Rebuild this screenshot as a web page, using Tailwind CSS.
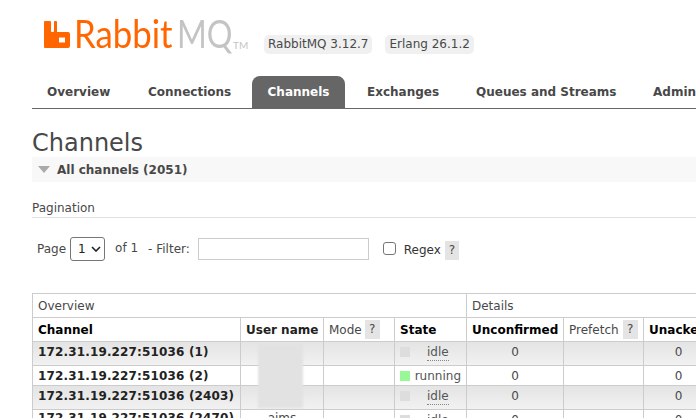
<!doctype html>
<html><head><meta charset="utf-8"><script src="https://cdn.jsdelivr.net/npm/@tailwindcss/browser@4"></script></head>
<body class="bg-white">
<div class="relative w-[696px] h-[418px] overflow-hidden font-['DejaVu_Sans',sans-serif] text-[#484848] text-[12px]">
  <header class="h-[76px] pl-[44px] flex items-start">
    <svg width="27" height="27" viewBox="0 0 27 27" class="mt-[21px] shrink-0"><path fill="#f60" fill-rule="evenodd" d="M1 0h5a1 1 0 0 1 1 1v9a1 1 0 0 0 1 1h1a1 1 0 0 0 1-1V1a1 1 0 0 1 1-1h1a1 1 0 0 1 1 1v10h11a2 2 0 0 1 2 2v12a2 2 0 0 1-2 2H1a1 1 0 0 1-1-1V1a1 1 0 0 1 1-1zM15 16.5v5h6v-5z"/></svg>
    <div class="w-[161px] shrink-0 mt-[11px] ml-[3px] flex text-[38px] leading-[44px] font-normal font-['Lato',sans-serif] whitespace-nowrap">
      <span class="inline-block w-[103px] origin-left scale-x-[.915] text-[#f60]">Rabbit</span>
      <span class="inline-block origin-left scale-x-[.845] text-[#c4c4c4]">MQ</span>
    </div>
    <span class="-ml-[2px] w-[31px] shrink-0 mt-[39px] text-[10px] leading-[12px] text-[#c4c4c4] font-['Lato',sans-serif]">TM</span>
    <div class="mt-[35px] flex gap-[13px] text-[12px] text-[#484848] whitespace-nowrap">
      <span class="bg-[#f0f0f0] rounded-[5px] h-[19px] leading-[19px] px-[4px]">RabbitMQ 3.12.7</span>
      <span class="bg-[#f0f0f0] rounded-[5px] h-[19px] leading-[19px] px-[4px]">Erlang 26.1.2</span>
    </div>
  </header>
  <nav class="ml-[32px] h-[33px] border-b border-[#666] flex font-bold text-[12px] text-[#484848] whitespace-nowrap">
    <a class="shrink-0 pl-[15px] w-[101px] leading-[33px]">Overview</a>
    <a class="shrink-0 pl-[15px] w-[119px] leading-[33px]">Connections</a>
    <a class="shrink-0 w-[93px] h-[32px] leading-[33px] text-center bg-[#666] text-white rounded-t-[8px]">Channels</a>
    <a class="shrink-0 pl-[22px] w-[131px] leading-[33px]">Exchanges</a>
    <a class="shrink-0 w-[177px] leading-[33px]">Queues and Streams</a>
    <a class="shrink-0 leading-[33px]">Admin</a>
  </nav>
  <main class="px-[32px] w-[760px]">
    <h1 class="mt-[19px] text-[24px] leading-[30px] font-normal">Channels</h1>
    <div class="-mt-[1px] h-[25px] bg-[#f8f8f8] flex items-center pl-[6px] font-bold text-[12px]">
      <svg width="12" height="7" viewBox="0 0 12 7"><path fill="#aaa" d="M0 0h12L6 7z"/></svg>
      <span class="ml-[7px]">All channels (2051)</span>
    </div>
    <div class="mt-[18px] h-[18px] leading-[16px] border-b border-[#e0e0e0] text-[12px]">Pagination</div>
    <div class="mt-[19px] h-[24px] flex items-center pl-[5px] text-[12px] whitespace-nowrap">
      <span>Page</span>
      <span class="ml-[4px] w-[35px] h-[24px] border border-[#767676] rounded-[3px] flex items-center justify-between pl-[7px] pr-[3px] text-[#222]">1<svg width="10" height="6" viewBox="0 0 10 6"><path d="M1 1l4 4 4-4" fill="none" stroke="#222" stroke-width="1.6"/></svg></span>
      <span class="ml-[10px] -mt-[2px]">of 1</span>
      <span class="ml-[10px]">- Filter:</span>
      <span class="ml-[8px] w-[171px] h-[22px] border border-[#ccc]"></span>
      <span class="ml-[14px] w-[13px] h-[13px] border border-[#767676] rounded-[3px] -mt-[1px]"></span>
      <span class="ml-[8px] mt-[2px] text-[#333]">Regex</span>
      <span class="ml-[4px] mt-[2px] w-[14px] h-[19px] bg-[#e4e4e4] text-center leading-[19px]">?</span>
    </div>
    <table class="mt-[32px] table-fixed border-collapse text-[12px] w-[681px]">
      <colgroup><col class="w-[208px]"><col class="w-[83px]"><col class="w-[71px]"><col class="w-[72px]"><col class="w-[97px]"><col class="w-[80px]"><col class="w-[70px]"></colgroup>
      <tbody class="[&_td]:border [&_td]:border-[#ccc] [&_th]:border [&_th]:border-[#ccc] [&_td]:whitespace-nowrap [&_th]:whitespace-nowrap">
        <tr class="h-[24px]"><th colspan="4" class="font-normal text-left px-[5px]">Overview</th><th colspan="3" class="font-normal text-left px-[5px]">Details</th></tr>
        <tr class="h-[24px] text-black"><th class="text-left px-[5px]">Channel</th><th class="text-left px-[5px] text-[#222]">User name</th>
          <th class="font-normal text-left px-[5px] text-[#484848]"><span class="flex gap-[3px] items-center">Mode<span class="shrink-0 w-[15px] h-[19px] bg-[#e4e4e4] text-center leading-[19px]">?</span></span></th>
          <th class="text-left px-[5px]">State</th><th class="text-center px-[5px]">Unconfirmed</th>
          <th class="font-normal text-left px-[5px] text-[#484848]"><span class="flex gap-[4px] items-center">Prefetch<span class="shrink-0 w-[15px] h-[19px] bg-[#e4e4e4] text-center leading-[19px]">?</span></span></th>
          <th class="text-left px-[5px]">Unacked</th></tr>
        <tr class="h-[24px] bg-gradient-to-b from-[#e4e4e4] to-[#f2f2f2]"><th class="text-left align-top pt-[2px] px-[5px] text-[#222] leading-[16px] tracking-[.15px]">172.31.19.227:51036 (1)</th><td></td><td></td>
          <td class="px-[5px] align-top pt-[3px]"><span class="flex"><span class="w-[10px] h-[10px] mt-[2px] bg-[#ddd]"></span><span class="ml-[17px] border-b border-dotted border-[#888] leading-[15px] text-[#555]">idle</span></span></td><td class="text-center align-top pt-[2px] leading-[16px]">0</td><td></td><td class="text-center align-top pt-[2px] leading-[16px]">0</td></tr>
        <tr class="h-[20px]"><th class="text-left px-[5px] text-[#222] leading-[16px] tracking-[.15px]">172.31.19.227:51036 (2)</th><td></td><td></td>
          <td class="px-[5px]"><span class="flex items-center"><span class="w-[10px] h-[10px] bg-[#98f898]"></span><span class="ml-[5px] text-[#555] leading-[16px]">running</span></span></td><td class="text-center leading-[16px]">0</td><td></td><td class="text-center leading-[16px]">0</td></tr>
        <tr class="h-[24px] bg-gradient-to-b from-[#e4e4e4] to-[#f2f2f2]"><th class="text-left align-top pt-[2px] px-[5px] text-[#222] leading-[16px] tracking-[.15px]">172.31.19.227:51036 (2403)</th><td></td><td></td>
          <td class="px-[5px] align-top pt-[3px]"><span class="flex"><span class="w-[10px] h-[10px] mt-[2px] bg-[#ddd]"></span><span class="ml-[17px] border-b border-dotted border-[#888] leading-[15px] text-[#555]">idle</span></span></td><td class="text-center align-top pt-[2px] leading-[16px]">0</td><td></td><td class="text-center align-top pt-[2px] leading-[16px]">0</td></tr>
        <tr class="h-[24px]"><th class="text-left align-top pt-[0px] px-[5px] text-[#222] leading-[16px] tracking-[.15px]">172.31.19.227:51036 (2470)</th><td class="text-center align-top leading-[16px]">aims</td><td></td>
          <td class="px-[5px] align-top pt-[3px]"><span class="flex"><span class="w-[10px] h-[10px] mt-[2px] bg-[#ddd]"></span><span class="ml-[17px] leading-[15px] text-[#555]">idle</span></span></td><td class="text-center align-top pt-[2px] leading-[16px]">0</td><td></td><td class="text-center align-top pt-[2px] leading-[16px]">0</td></tr>
      </tbody>
    </table>
  </main>
  <div class="absolute left-[258px] top-[344px] w-[45px] h-[64px] bg-[#e2e2e2] blur-[1px]"></div>
</div>
</body></html>
